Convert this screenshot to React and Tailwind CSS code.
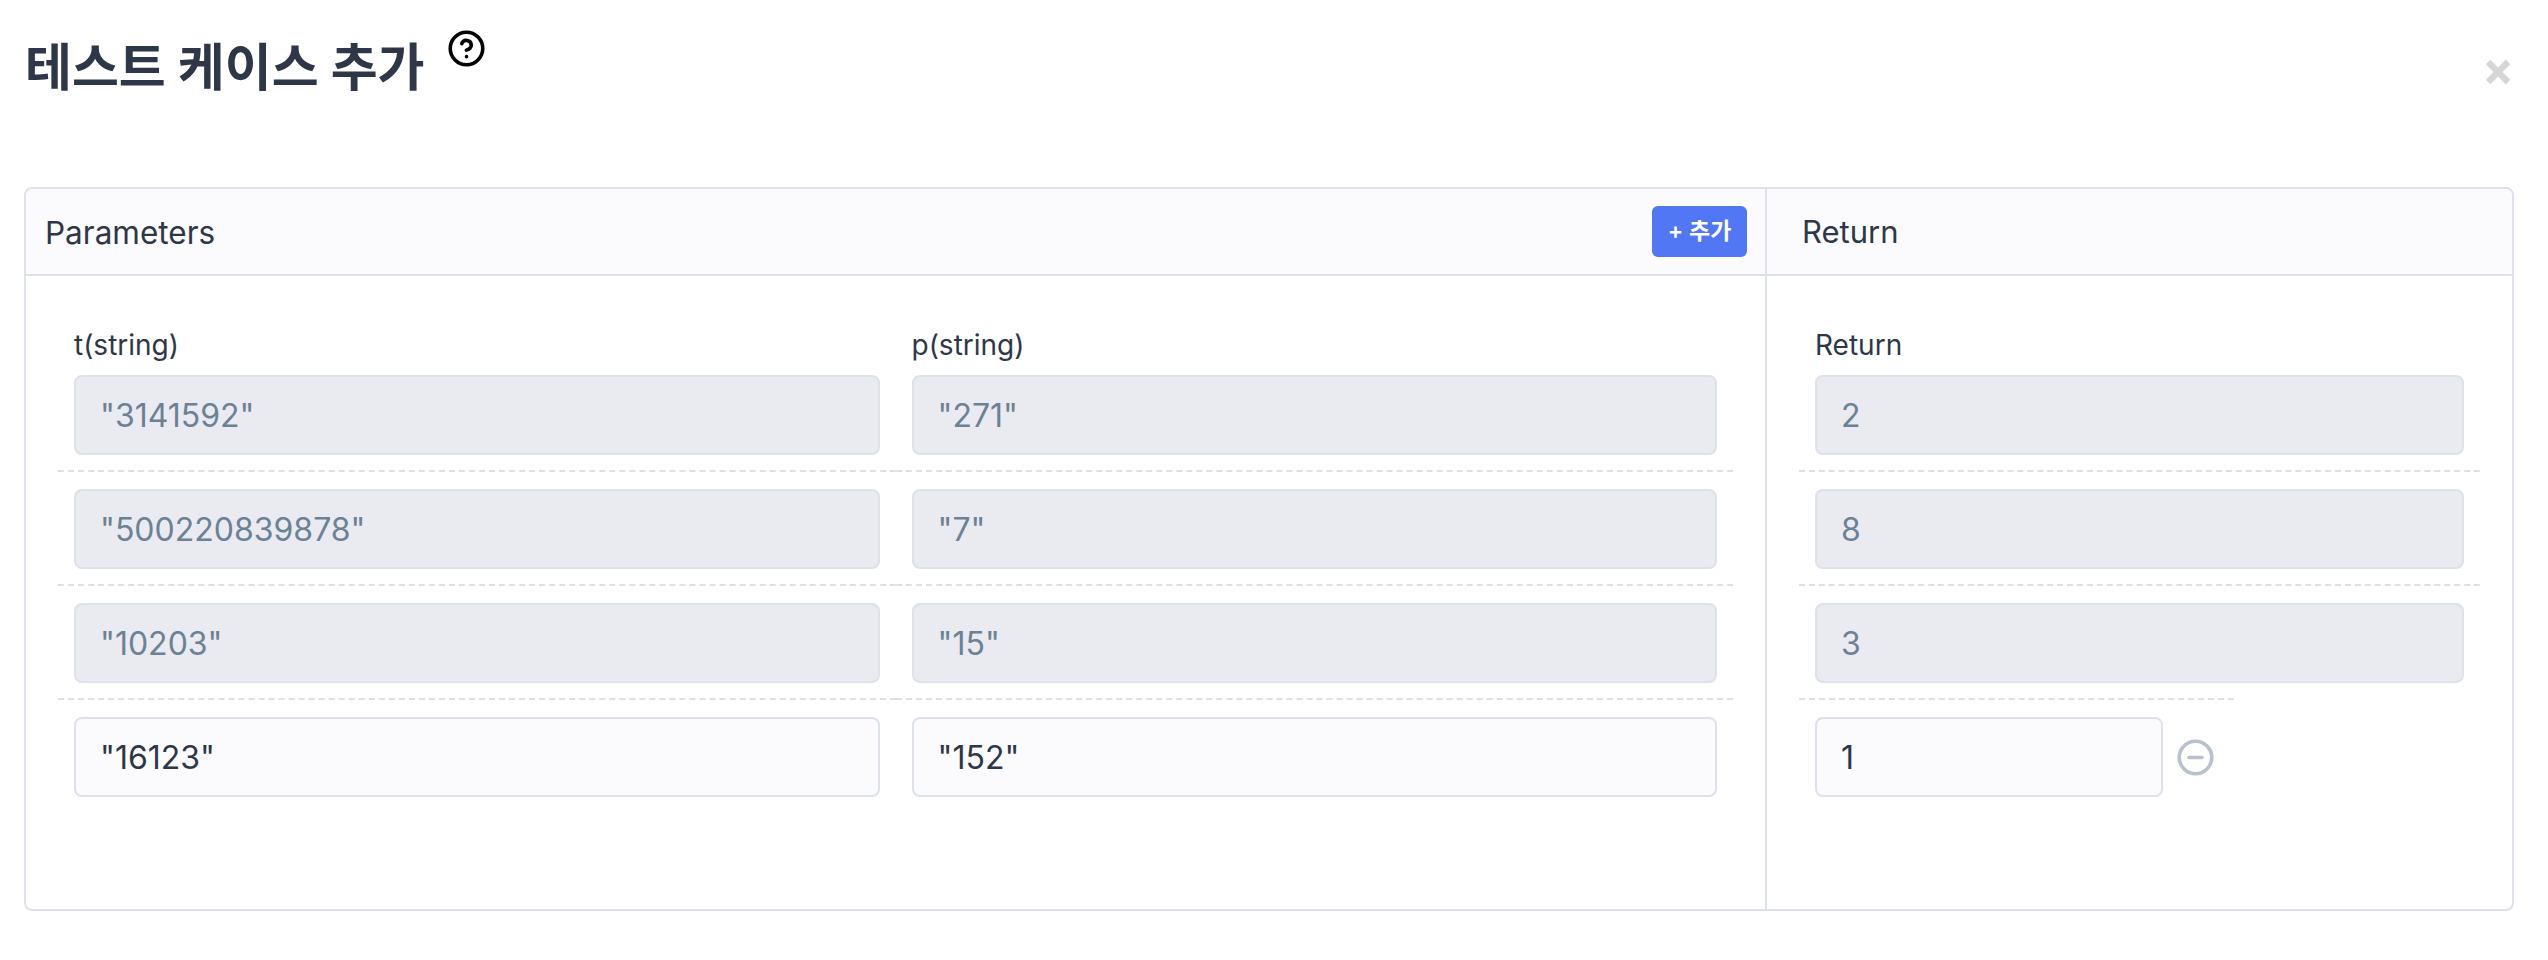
import React from 'react';
import { CircleHelp, CircleMinus } from 'lucide-react';

const FONT = "font-['Inter','Noto_Sans_CJK_KR',sans-serif]";

const PARAM_ROWS = [
  ['"3141592"', '"271"'],
  ['"500220839878"', '"7"'],
  ['"10203"', '"15"'],
];
const RETURN_ROWS = ['2', '8', '3'];

function Field({ value, disabled, className = '' }) {
  return (
    <input
      readOnly
      value={value}
      className={`h-[80px] rounded-[8px] border-2 border-[#dce1ea] px-[24px] text-[32px] outline-none ${FONT} ${
        disabled ? 'bg-[#e9ebf0] text-[#6b8294]' : 'bg-[#fbfbfd] text-[#2d3748]'
      } ${className}`}
    />
  );
}

function Label({ children }) {
  return <div className="mb-[10px] h-[40px] text-[28px] leading-[40px] text-[#2d3748]">{children}</div>;
}

export default function App() {
  return (
    <div className={`h-[960px] w-[2548px] bg-white ${FONT}`}>
      {/* Title */}
      <div className="flex h-[187px] items-start justify-between pl-[25px] pr-[38px]">
        <div className="flex items-start">
          <h1 className="mt-[33px] text-[51px] font-bold leading-[70px] text-[#2d3748]">테스트 케이스 추가</h1>
          <CircleHelp size={39} strokeWidth={2.2} className="ml-[22px] mt-[29px] text-black" />
        </div>
        <svg width="24" height="24" viewBox="0 0 24 24" className="mt-[60px]">
          <path d="M2 2l20 20M22 2L2 22" stroke="#d6d6d6" strokeWidth="6.5" fill="none" />
        </svg>
      </div>

      {/* Table */}
      <div className="ml-[24px] flex h-[724px] w-[2490px] rounded-[8px] border-2 border-[#dce1ea]">
        <div className="flex w-[1741px] flex-col border-r-2 border-[#dce1ea]">
          <div className="flex h-[87px] shrink-0 items-center justify-between rounded-tl-[8px] border-b-2 border-[#dce1ea] bg-[#fbfbfd] pl-[19px] pr-[18px]">
            <span className="pt-[2px] text-[31.5px] text-[#2d3748]">Parameters</span>
            <button className="h-[51px] w-[95px] rounded-[6px] bg-[#5277f5] text-[23px] font-semibold text-white">+ 추가</button>
          </div>
          <div className="px-[32px] pt-[32px]">
            <div className="grid grid-cols-2">
              {PARAM_ROWS.map((row, i) =>
                row.map((v, j) => (
                  <div key={`${i}-${j}`} className="border-b-2 border-dashed border-[#dce1ea] px-[16px] pb-[15px] pt-[17px]">
                    {i === 0 && <Label>{j === 0 ? 't(string)' : 'p(string)'}</Label>}
                    <Field value={v} disabled className="w-full" />
                  </div>
                ))
              )}
              <div className="px-[16px] pt-[17px]">
                <Field value={'"16123"'} className="w-full" />
              </div>
              <div className="px-[16px] pt-[17px]">
                <Field value={'"152"'} className="w-full" />
              </div>
            </div>
          </div>
        </div>

        <div className="flex flex-1 flex-col">
          <div className="flex h-[87px] shrink-0 items-center rounded-tr-[8px] border-b-2 border-[#dce1ea] bg-[#fbfbfd] pl-[35px]">
            <span className="pt-[2px] text-[31px] text-[#2d3748]">Return</span>
          </div>
          <div className="px-[32px] pt-[32px]">
            {RETURN_ROWS.map((v, i) => (
              <div key={i} className={`px-[16px] pb-[15px] pt-[17px] ${i < 2 ? 'border-b-2 border-dashed border-[#dce1ea]' : ''}`}>
                {i === 0 && <Label>Return</Label>}
                <Field value={v} disabled className="w-full" />
              </div>
            ))}
            <div className="flex w-[435px] items-center border-t-2 border-dashed border-[#dce1ea] pl-[16px] pt-[17px]">
              <Field value="1" className="w-[348px]" />
              <CircleMinus size={39} strokeWidth={2.2} className="ml-[13px] shrink-0 text-[#b8c2cf]" />
            </div>
          </div>
        </div>
      </div>
    </div>
  );
}
